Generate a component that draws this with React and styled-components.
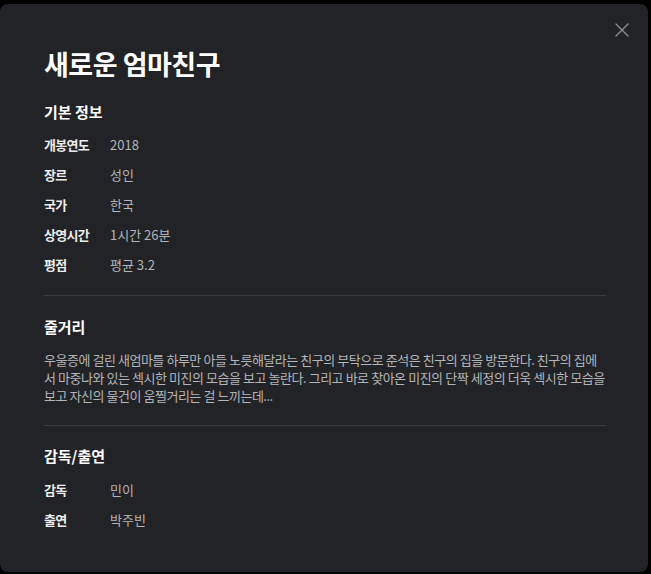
import React from 'react'
import styled, { createGlobalStyle } from 'styled-components'

const GlobalStyle = createGlobalStyle`
  body {
    margin: 0;
    background: #000;
    font-family: "Noto Sans CJK KR", "Noto Sans", sans-serif;
  }
`

const Modal = styled.div`
  position: relative;
  box-sizing: border-box;
  width: 648px;
  height: 568px;
  margin-top: 4px;
  padding: 42px 42px 0 44px;
  background: #222327;
  border-radius: 8px;
  color: #fff;
`

const CloseButton = styled.button`
  position: absolute;
  top: 17px;
  right: 17px;
  width: 18px;
  height: 18px;
  padding: 0;
  border: 0;
  background: none;
  display: flex;
  align-items: center;
  justify-content: center;
  cursor: pointer;
  svg {
    width: 14px;
    height: 14px;
    stroke: #8e8f93;
  }
`

const Title = styled.h1`
  margin: 0 0 18px;
  font-size: 27px;
  line-height: 36px;
  font-weight: 700;
  letter-spacing: -0.5px;
`

const Heading = styled.h2`
  margin: 0;
  font-size: 15px;
  line-height: 24px;
  font-weight: 700;
`

const InfoList = styled.dl`
  margin: ${({ $top }) => $top}px 0 0;
`

const Row = styled.div`
  display: grid;
  grid-template-columns: 66px 1fr;
  align-items: center;
  height: 30px;
  font-size: 13px;
`

const Label = styled.dt`
  font-weight: 700;
  color: #ececec;
  letter-spacing: -0.7px;
`

const Value = styled.dd`
  margin: 0;
  color: #b4b5b8;
`

const Divider = styled.hr`
  margin: ${({ $top }) => $top}px 0 ${({ $bottom }) => $bottom}px;
  border: 0;
  border-top: 1px solid #3a3b3f;
`

const Synopsis = styled.p`
  margin: 12px 0 0;
  font-size: 13px;
  line-height: 18px;
  letter-spacing: -0.5px;
  word-spacing: 0.2px;
  color: #b4b5b8;
`

const basicInfo = [
  ['개봉연도', '2018'],
  ['장르', '성인'],
  ['국가', '한국'],
  ['상영시간', '1시간 26분'],
  ['평점', '평균 3.2'],
]

const credits = [
  ['감독', '민이'],
  ['출연', '박주빈'],
]

const App = () => (
  <>
    <GlobalStyle />
    <Modal>
      <CloseButton aria-label="닫기">
        <svg viewBox="0 0 14 14" fill="none" strokeWidth="1.3" strokeLinecap="round">
          <path d="M1 1L13 13M13 1L1 13" />
        </svg>
      </CloseButton>

      <Title>새로운 엄마친구</Title>

      <Heading>기본 정보</Heading>
      <InfoList $top={5}>
        {basicInfo.map(([label, value]) => (
          <Row key={label}>
            <Label>{label}</Label>
            <Value>{value}</Value>
          </Row>
        ))}
      </InfoList>

      <Divider $top={16} $bottom={19} />

      <Heading>줄거리</Heading>
      <Synopsis>
        우울증에 걸린 새엄마를 하루만 아들 노릇해달라는 친구의 부탁으로 준석은 친구의 집을 방문한다. 친구의 집에서
        마중나와 있는 섹시한 미진의 모습을 보고 놀란다. 그리고 바로 찾아온 미진의 단짝 세정의 더욱 섹시한 모습을 보고
        자신의 물건이 움찔거리는 걸 느끼는데...
      </Synopsis>

      <Divider $top={20} $bottom={18} />

      <Heading>감독/출연</Heading>
      <InfoList $top={6}>
        {credits.map(([label, value]) => (
          <Row key={label}>
            <Label>{label}</Label>
            <Value>{value}</Value>
          </Row>
        ))}
      </InfoList>
    </Modal>
  </>
)

export default App
